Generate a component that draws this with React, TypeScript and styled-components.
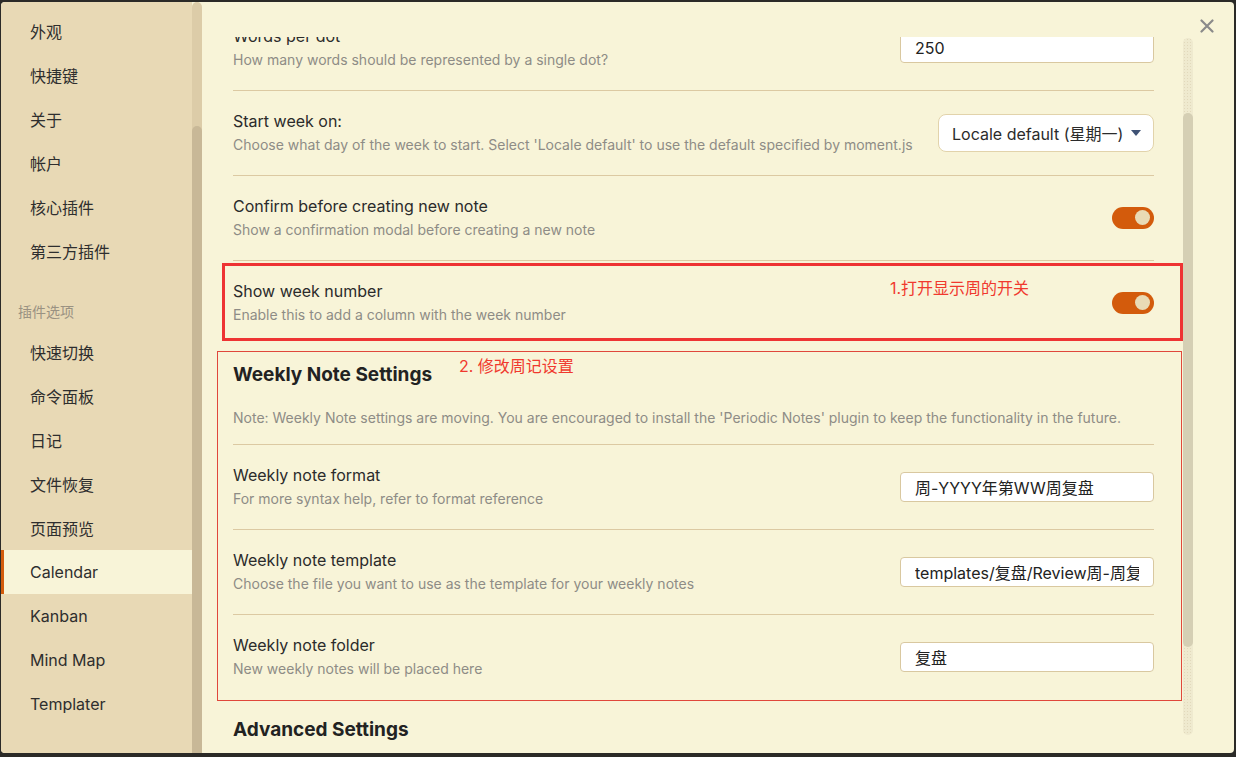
import React from "react";
import styled, { createGlobalStyle } from "styled-components";

const GlobalStyle = createGlobalStyle`
  html, body { margin: 0; padding: 0; background: #2b2a27; }
  body { font-family: Inter, "Noto Sans CJK SC", sans-serif; -webkit-font-smoothing: antialiased; }
  * { box-sizing: border-box; }
`;

const Frame = styled.div`
  height: 757px;
  padding: 2px 2px 4px 1px;
`;

const Modal = styled.div`
  position: relative;
  display: flex;
  height: 751px;
  background: #f8f4d8;
  border-radius: 4px;
  overflow: hidden;
`;

const Sidebar = styled.nav`
  width: 191px;
  flex: none;
  background: #e8d9b5;
  padding-top: 7px;
  display: flex;
  flex-direction: column;
`;

const NavItem = styled.div<{ $active?: boolean }>`
  height: 44px;
  display: flex;
  align-items: center;
  padding-left: 29px;
  font-size: 16px;
  color: #2e2e2e;
  background: ${(p) => (p.$active ? "#f8f4d8" : "transparent")};
  box-shadow: ${(p) => (p.$active ? "inset 3px 0 0 #d35b0c" : "none")};
`;

const GroupLabel = styled.div`
  padding: 29px 0 8px 17px;
  font-size: 14px;
  line-height: 20px;
  color: #9a9282;
`;

const SideScroll = styled.div`
  width: 10px;
  flex: none;
  background: #dccca8;
  border-radius: 5px 5px 0 0;
  display: flex;
  flex-direction: column;
`;

const SideThumb = styled.div`
  margin-top: 124px;
  flex: 1;
  background: #c8b897;
  border-radius: 5px 5px 0 0;
`;

const Content = styled.main`
  flex: 1;
  display: flex;
  align-items: flex-start;
`;

const ScrollView = styled.div`
  width: 952px;
  height: 714px;
  flex: none;
  margin-top: 35px;
  padding-left: 31px;
  overflow-x: visible;
  overflow-y: clip;
`;

const Inner = styled.div`
  width: 921px;
  margin-top: -31px;
`;

const Row = styled.div<{ $noBorder?: boolean; $compact?: boolean }>`
  display: flex;
  align-items: center;
  justify-content: space-between;
  padding: ${(p) => (p.$compact ? "14px 0 13px" : "19px 0 20px")};
  border-bottom: ${(p) => (p.$noBorder ? "none" : "1px solid #dcc9a2")};
`;

const Info = styled.div`
  display: flex;
  flex-direction: column;
  gap: 3px;
`;

const Name = styled.div`
  font-size: 16px;
  line-height: 22px;
  color: #2b2b2b;
`;

const Desc = styled.div`
  font-size: 14px;
  line-height: 20px;
  color: #8e8c86;
`;

const TextInput = styled.input`
  width: 254px;
  height: 30px;
  border: 1px solid #d9c8a0;
  border-radius: 4px;
  background: #fff;
  padding: 0 14px;
  font-family: inherit;
  font-size: 16px;
  color: #222;
  outline: none;
`;

const Select = styled.div`
  width: 216px;
  height: 38px;
  border: 1px solid #e2d3ab;
  border-radius: 8px;
  background: #fff;
  padding: 0 12px 0 13px;
  display: flex;
  align-items: center;
  justify-content: space-between;
  font-size: 16px;
  color: #2b2b2b;
`;

const Caret = styled.span`
  width: 0;
  height: 0;
  border-left: 5px solid transparent;
  border-right: 5px solid transparent;
  border-top: 6px solid #3f5275;
`;

const Toggle = styled.div`
  width: 42px;
  height: 22px;
  border-radius: 11px;
  background: #d35b0c;
  display: flex;
  align-items: center;
  justify-content: flex-end;
  padding-right: 4px;
`;

const Knob = styled.div`
  width: 15px;
  height: 15px;
  border-radius: 50%;
  background: #e9dab5;
`;

const Highlight = styled.div`
  position: relative;
  margin: 2px -29px 0 -11px;
  border: 3px solid #ee3333;
  padding: 0 26px 0 8px;
`;

const Section = styled.div`
  position: relative;
  margin: 10px -28px 0 -16px;
  border: 1px solid #e0473b;
  padding: 0 27px 1px 15px;
`;

const Annotation = styled.span<{ $left: number; $top: number }>`
  position: absolute;
  left: ${(p) => p.$left}px;
  top: ${(p) => p.$top}px;
  font-size: 16px;
  line-height: 22px;
  color: #f0392e;
  white-space: nowrap;
`;

const Heading = styled.h3<{ $mt: number }>`
  margin: ${(p) => p.$mt}px 0 0;
  font-size: 19px;
  line-height: 24px;
  font-weight: 700;
  color: #222;
`;

const Note = styled.div`
  margin-top: 21px;
  padding-bottom: 16px;
  border-bottom: 1px solid #dcc9a2;
  font-size: 14px;
  line-height: 20px;
  color: #8e8c86;
`;

const ScrollTrack = styled.div`
  width: 10px;
  flex: none;
  margin: 36px 0 0 29px;
  height: 697px;
  border-radius: 5px;
  background-color: #efeacf;
  background-image: radial-gradient(#e2d9bb 0.8px, transparent 1px);
  background-size: 3px 3px;
  display: flex;
  flex-direction: column;
`;

const ScrollThumb = styled.div`
  margin-top: 75px;
  height: 534px;
  border-radius: 5px;
  background: #d5cfb4;
`;

const Close = styled.button`
  position: absolute;
  top: 16px;
  right: 19px;
  width: 16px;
  height: 16px;
  padding: 0;
  border: none;
  background: transparent;
  display: flex;
  align-items: center;
  justify-content: center;
`;

const sideItems = ["外观", "快捷键", "关于", "帐户", "核心插件", "第三方插件"];
const pluginItems = ["快速切换", "命令面板", "日记", "文件恢复", "页面预览", "Calendar", "Kanban", "Mind Map", "Templater"];

const Setting: React.FC<{
  name: string;
  desc: string;
  control: React.ReactNode;
  noBorder?: boolean;
  compact?: boolean;
}> = ({ name, desc, control, noBorder, compact }) => (
  <Row $noBorder={noBorder} $compact={compact}>
    <Info>
      <Name>{name}</Name>
      <Desc>{desc}</Desc>
    </Info>
    {control}
  </Row>
);

const Switch = () => (
  <Toggle>
    <Knob />
  </Toggle>
);

export default function App() {
  return (
    <>
      <GlobalStyle />
      <Frame>
        <Modal>
          <Sidebar>
            {sideItems.map((s) => (
              <NavItem key={s}>{s}</NavItem>
            ))}
            <GroupLabel>插件选项</GroupLabel>
            {pluginItems.map((s) => (
              <NavItem key={s} $active={s === "Calendar"}>
                {s}
              </NavItem>
            ))}
          </Sidebar>
          <SideScroll>
            <SideThumb />
          </SideScroll>
          <Content>
            <ScrollView>
              <Inner>
                <Setting
                  name="Words per dot"
                  desc="How many words should be represented by a single dot?"
                  control={<TextInput readOnly value="250" />}
                />
                <Setting
                  name="Start week on:"
                  desc="Choose what day of the week to start. Select 'Locale default' to use the default specified by moment.js"
                  control={
                    <Select>
                      <span>Locale default (星期一)</span>
                      <Caret />
                    </Select>
                  }
                />
                <Setting
                  name="Confirm before creating new note"
                  desc="Show a confirmation modal before creating a new note"
                  control={<Switch />}
                />
                <Highlight>
                  <Setting
                    name="Show week number"
                    desc="Enable this to add a column with the week number"
                    control={<Switch />}
                    noBorder
                    compact
                  />
                  <Annotation $left={665} $top={11}>1.打开显示周的开关</Annotation>
                </Highlight>
                <Section>
                  <Heading $mt={11}>Weekly Note Settings</Heading>
                  <Annotation $left={241} $top={3}>2. 修改周记设置</Annotation>
                  <Note>
                    Note: Weekly Note settings are moving. You are encouraged to install the 'Periodic Notes' plugin to keep the functionality in the future.
                  </Note>
                  <Setting
                    name="Weekly note format"
                    desc="For more syntax help, refer to format reference"
                    control={<TextInput readOnly value="周-YYYY年第WW周复盘" />}
                  />
                  <Setting
                    name="Weekly note template"
                    desc="Choose the file you want to use as the template for your weekly notes"
                    control={<TextInput readOnly value="templates/复盘/Review周-周复盘" />}
                  />
                  <Setting
                    name="Weekly note folder"
                    desc="New weekly notes will be placed here"
                    control={<TextInput readOnly value="复盘" />}
                    noBorder
                  />
                </Section>
                <Heading $mt={17}>Advanced Settings</Heading>
              </Inner>
            </ScrollView>
            <ScrollTrack>
              <ScrollThumb />
            </ScrollTrack>
          </Content>
          <Close aria-label="Close">
            <svg width="14" height="14" viewBox="0 0 14 14">
              <path d="M1.5 1.5 L12.5 12.5 M12.5 1.5 L1.5 12.5" stroke="#8a8a8a" strokeWidth="2.2" strokeLinecap="round" />
            </svg>
          </Close>
        </Modal>
      </Frame>
    </>
  );
}
